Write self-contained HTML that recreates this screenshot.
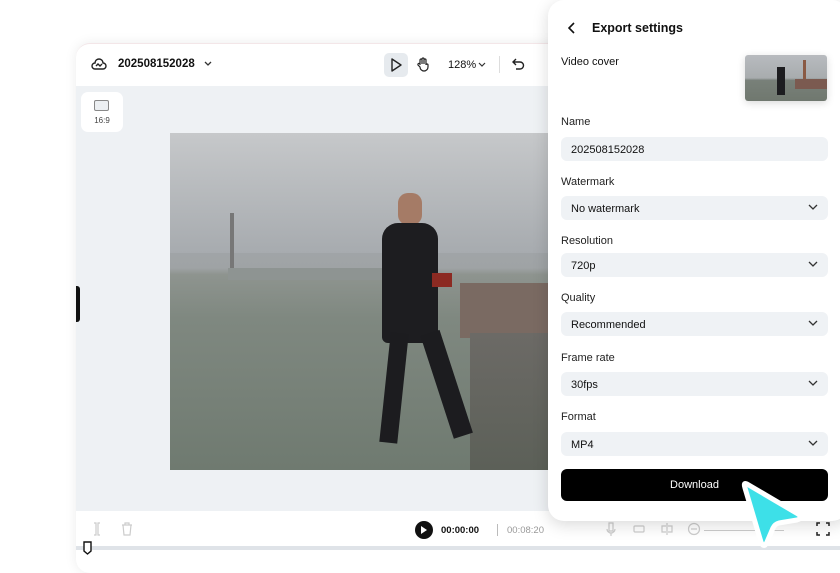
<!DOCTYPE html>
<html><head><style>
*{margin:0;padding:0;box-sizing:border-box}
body{width:840px;height:560px;overflow:hidden;background:#fff;font-family:"Liberation Sans",sans-serif;position:relative;color:#111}
.ed{position:absolute;left:76px;top:43px;width:800px;height:530px;background:#fff;border-radius:14px;box-shadow:0 0 12px rgba(0,0,0,.08);overflow:hidden;border-top:1px solid #f3e6e8}
.canvas{position:absolute;left:0;top:42px;width:100%;height:425px;background:#eef1f4}
.video{position:absolute;left:170px;top:133px;width:378px;height:337px;background:linear-gradient(#b9bcbf 0%,#a2a6aa 30%,#9fa3a5 40%,#8e948f 42%,#7f8880 55%,#6f7a70 100%);overflow:hidden}
.panel{position:absolute;left:548px;top:0;width:300px;height:521px;background:#fff;border-radius:16px;box-shadow:0 4px 16px rgba(0,0,0,.15)}
.lbl{position:absolute;left:13px;font-size:11px;color:#222}
.fld{position:absolute;left:13px;width:267px;height:24px;background:#eff2f5;border-radius:6px;font-size:11px;padding:7px 10px;color:#111}
.fld svg{position:absolute;right:10px;top:8px}
.gi{position:absolute;top:478px}
</style></head><body>
<div class="ed">
  <svg style="position:absolute;left:15px;top:13px" width="16" height="14" viewBox="0 0 16 14"><path d="M4 12h8a3 3 0 0 0 0-6 4 4 0 0 0-8 0 3 3 0 0 0 0 6z M5 9l2 -2 2 2 2-2" fill="none" stroke="#222" stroke-width="1.4"/></svg>
  <div style="position:absolute;left:42px;top:14px;font-size:11.5px;font-weight:bold">202508152028</div>
  <svg style="position:absolute;left:128px;top:17px" width="8" height="6"><path d="M1 1l3 3 3-3" fill="none" stroke="#333" stroke-width="1.3"/></svg>
  <div style="position:absolute;left:308px;top:9px;width:24px;height:24px;background:#e6eaee;border-radius:5px"></div>
  <svg style="position:absolute;left:314px;top:14px" width="12" height="14"><path d="M2 1l9 6-9 6z" fill="none" stroke="#222" stroke-width="1.4" stroke-linejoin="round"/></svg>
  <svg style="position:absolute;left:340px;top:13px" width="14" height="15"><path d="M4 8V3a1 1 0 0 1 2 0v4V2a1 1 0 0 1 2 0v5V3a1 1 0 0 1 2 0v5a1 1 0 0 1 2 0v2a4 4 0 0 1-8 0L2 8a1 1 0 0 1 2-1z" fill="none" stroke="#222" stroke-width="1.2"/></svg>
  <div style="position:absolute;left:372px;top:15px;font-size:11px">128%</div>
  <svg style="position:absolute;left:402px;top:18px" width="8" height="6"><path d="M1 1l3 3 3-3" fill="none" stroke="#333" stroke-width="1.2"/></svg>
  <div style="position:absolute;left:423px;top:12px;width:1px;height:17px;background:#ddd"></div>
  <svg style="position:absolute;left:436px;top:13px" width="13" height="14"><path d="M4 2L1 5l3 3M1 5h7a3.5 3.5 0 0 1 0 7H4" fill="none" stroke="#222" stroke-width="1.4"/></svg>
  <div class="canvas">
    <div style="position:absolute;left:5px;top:6px;width:42px;height:40px;background:#fff;border-radius:7px">
      <div style="position:absolute;left:13px;top:8px;width:15px;height:11px;border:1px solid #888;border-radius:2px;background:#eceff2"></div>
      <div style="position:absolute;left:0;width:42px;top:24px;text-align:center;font-size:8px;color:#444">16:9</div>
    </div>
  </div>
  <div style="position:absolute;left:0;top:242px;width:4px;height:36px;background:#111;border-radius:0 3px 3px 0"></div>
  <svg style="position:absolute;left:16px;top:478px" width="10" height="14"><path d="M2 1h2v12H2M8 1H6v12h2" fill="none" stroke="#ccc" stroke-width="1.2"/></svg>
  <svg style="position:absolute;left:45px;top:478px" width="12" height="14"><path d="M1 3h10M4 3V1h4v2M2 3l1 10h6l1-10" fill="none" stroke="#ccc" stroke-width="1.2"/></svg>
  <div style="position:absolute;left:339px;top:477px;width:18px;height:18px;border-radius:50%;background:#111"></div>
  <svg style="position:absolute;left:345px;top:482px" width="7" height="8"><path d="M0 0l6 4-6 4z" fill="#fff"/></svg>
  <div style="position:absolute;left:365px;top:481px;font-size:9.5px;font-weight:bold">00:00:00</div>
  <div style="position:absolute;left:421px;top:480px;width:1px;height:12px;background:#bbb"></div>
  <div style="position:absolute;left:431px;top:481px;font-size:9.5px;color:#999">00:08:20</div>
  <svg class="gi" style="left:530px" width="10" height="15"><path d="M3 1h4v8H3zM1 7a4 4 0 0 0 8 0M5 11v3" fill="none" stroke="#ccc" stroke-width="1.2"/></svg>
  <svg class="gi" style="left:556px" width="14" height="14"><rect x="2" y="4" width="10" height="6" rx="1" fill="none" stroke="#ccc" stroke-width="1.2"/></svg>
  <svg class="gi" style="left:584px" width="14" height="14"><path d="M7 1v12M6 4H2v6h4M8 4h4v6H8" fill="none" stroke="#ccc" stroke-width="1.2"/></svg>
  <svg class="gi" style="left:611px" width="14" height="14"><circle cx="7" cy="7" r="5.5" fill="none" stroke="#ccc" stroke-width="1.2"/><path d="M4 7h6" stroke="#ccc" stroke-width="1.2"/></svg>
  <div style="position:absolute;left:628px;top:486px;width:80px;height:1px;background:#ccc"></div>
  <svg style="position:absolute;left:740px;top:478px" width="14" height="14"><path d="M1 4V1h3M10 1h3v3M13 10v3h-3M4 13H1v-3" fill="none" stroke="#222" stroke-width="1.5"/></svg>
  <div style="position:absolute;left:0;top:502px;width:100%;height:4px;background:#dfe3e8"></div>
  <svg style="position:absolute;left:7px;top:497px" width="10" height="14"><path d="M1 1h7v9l-3.5 3L1 10z" fill="#fff" stroke="#111" stroke-width="1.4"/></svg>
</div>
<div class="video">
  <div style="position:absolute;left:0;top:0;width:100%;height:120px;background:linear-gradient(#c6c8ca,#a7abaf)"></div>
  <div style="position:absolute;left:60px;top:80px;width:4px;height:65px;background:#777"></div>
  <div style="position:absolute;left:58px;top:135px;width:160px;height:12px;background:#8e9492"></div>
  <div style="position:absolute;left:290px;top:150px;width:88px;height:55px;background:#7a6a62"></div>
  <div style="position:absolute;left:300px;top:200px;width:78px;height:137px;background:linear-gradient(#6c6a66,#5c6058)"></div>
  <div style="position:absolute;left:228px;top:60px;width:24px;height:32px;border-radius:10px;background:#a57b66"></div>
  <div style="position:absolute;left:212px;top:90px;width:56px;height:120px;border-radius:16px 16px 6px 6px;background:#1d1d20"></div>
  <div style="position:absolute;left:262px;top:140px;width:20px;height:14px;background:#8c2a22"></div>
  <div style="position:absolute;left:215px;top:200px;width:18px;height:110px;background:#1c1c1f;transform:rotate(6deg)"></div>
  <div style="position:absolute;left:250px;top:200px;width:20px;height:108px;background:#1c1c1f;transform:rotate(-18deg);transform-origin:top"></div>
</div>
<div class="panel">
  <svg style="position:absolute;left:20px;top:22px" width="8" height="12"><path d="M6 1L1 6l5 5" fill="none" stroke="#111" stroke-width="1.6"/></svg>
  <div style="position:absolute;left:44px;top:21px;font-size:12.5px;font-weight:bold">Export settings</div>
  <div class="lbl" style="top:56px;color:#111">Video cover</div>
  <div style="position:absolute;left:197px;top:55px;width:82px;height:46px;border-radius:3px;background:linear-gradient(#b8bbbf 0%,#a8acae 50%,#788079 55%,#70786f 100%);box-shadow:0 2px 8px rgba(0,0,0,.15)">
    <div style="position:absolute;left:32px;top:12px;width:8px;height:28px;background:#1d1d20"></div>
    <div style="position:absolute;left:58px;top:5px;width:3px;height:22px;background:#8a5a44"></div>
    <div style="position:absolute;left:50px;top:24px;width:32px;height:10px;background:#7b5a50"></div>
  </div>
  <div class="lbl" style="top:116px">Name</div>
  <div class="fld" style="top:137px">202508152028</div>
  <div class="lbl" style="top:176px">Watermark</div>
  <div class="fld" style="top:196px">No watermark<svg width="10" height="6"><path d="M1 1l4 4 4-4" fill="none" stroke="#333" stroke-width="1.3"/></svg></div>
  <div class="lbl" style="top:235px">Resolution</div>
  <div class="fld" style="top:253px">720p<svg width="10" height="6"><path d="M1 1l4 4 4-4" fill="none" stroke="#333" stroke-width="1.3"/></svg></div>
  <div class="lbl" style="top:292px">Quality</div>
  <div class="fld" style="top:312px">Recommended<svg width="10" height="6"><path d="M1 1l4 4 4-4" fill="none" stroke="#333" stroke-width="1.3"/></svg></div>
  <div class="lbl" style="top:352px">Frame rate</div>
  <div class="fld" style="top:372px">30fps<svg width="10" height="6"><path d="M1 1l4 4 4-4" fill="none" stroke="#333" stroke-width="1.3"/></svg></div>
  <div class="lbl" style="top:411px">Format</div>
  <div class="fld" style="top:432px">MP4<svg width="10" height="6"><path d="M1 1l4 4 4-4" fill="none" stroke="#333" stroke-width="1.3"/></svg></div>
  <div style="position:absolute;left:13px;top:469px;width:267px;height:32px;background:#000;border-radius:6px;color:#fff;font-size:11px;text-align:center;line-height:32px">Download</div>
</div>
<svg style="position:absolute;left:735px;top:476px" width="75" height="80" viewBox="0 0 75 80"><path d="M12 8Q8 6 10 12L26 66Q29 73 32 66L38 52Q40 48 44 47L62 44Q69 42 63 38Z" fill="#3de0e8" stroke="#fff" stroke-width="5" stroke-linejoin="round"/></svg>
</body></html>
